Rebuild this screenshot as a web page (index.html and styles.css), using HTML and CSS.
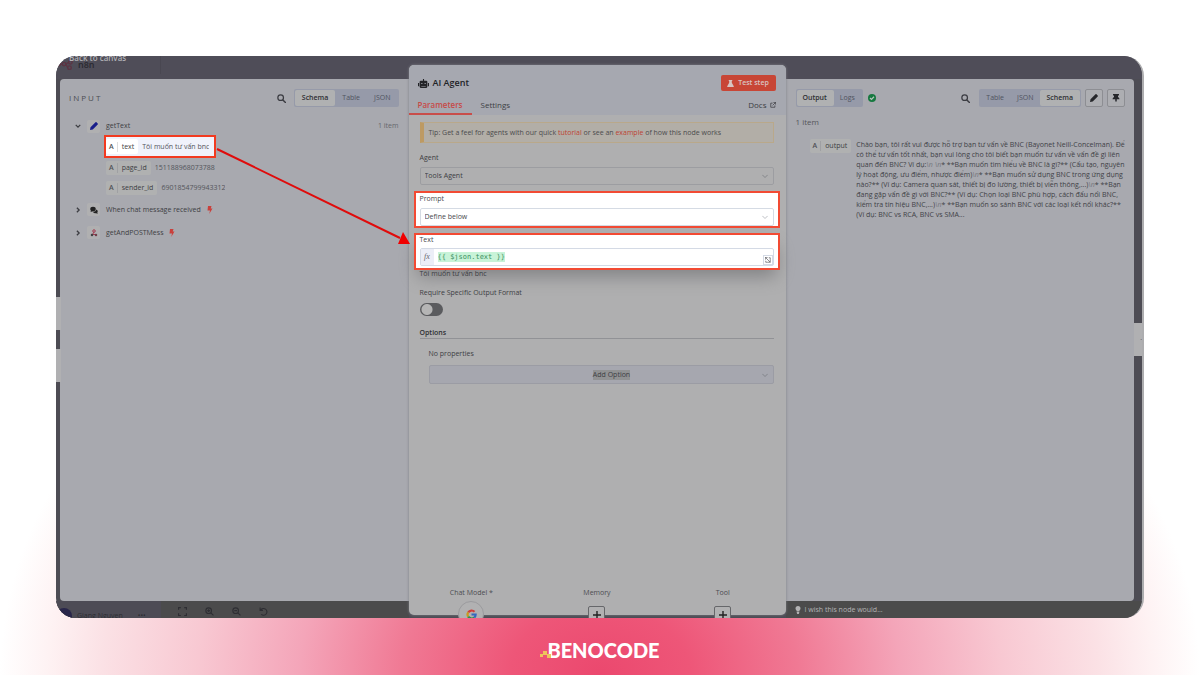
FILE: index.html
```html
<!DOCTYPE html>
<html lang="vi">
<head>
<meta charset="utf-8">
<title>AI Agent</title>
<link rel="stylesheet" href="styles.css">
</head>
<body>
<svg class="defs" aria-hidden="true">
  <symbol id="search" viewBox="0 0 16 16"><circle cx="6.5" cy="6.5" r="5" fill="none" stroke="currentColor" stroke-width="2.2"/><path d="M10.5 10.5 15 15" stroke="currentColor" stroke-width="2.6" stroke-linecap="round"/></symbol>
  <symbol id="pencil" viewBox="0 0 16 16"><path d="M0 16l1-5.500L9 2.500 13.500 7 5.500 15zM9 2.500l2-2q1-.8 2 0l2.400 2.400q.8 1 0 2L13.500 7z" fill="currentColor"/></symbol>
  <symbol id="down" viewBox="0 0 16 16"><path d="M2 5l6 6 6-6" fill="none" stroke="currentColor" stroke-width="3.500"/></symbol>
  <symbol id="thin" viewBox="0 0 16 16"><path d="M1 5l7 7 7-7" fill="none" stroke="currentColor" stroke-width="2"/></symbol>
  <symbol id="right" viewBox="0 0 16 16"><path d="M5 2l6 6-6 6" fill="none" stroke="currentColor" stroke-width="3.500"/></symbol>
  <symbol id="bolt" viewBox="0 0 16 16"><path d="M4 0h7L9.500 5H13L6.500 16 8 9H3z" fill="currentColor"/></symbol>
  <symbol id="zoomin" viewBox="0 0 16 16"><circle cx="6.500" cy="6.500" r="5" fill="none" stroke="currentColor" stroke-width="2"/><path d="M10.500 10.500 15 15M4 6.500h5M6.500 4v5" stroke="currentColor" stroke-width="2"/></symbol>
  <symbol id="zoomout" viewBox="0 0 16 16"><circle cx="6.500" cy="6.500" r="5" fill="none" stroke="currentColor" stroke-width="2"/><path d="M10.500 10.500 15 15M4 6.500h5" stroke="currentColor" stroke-width="2"/></symbol>
</svg>
<main class="frame">
  <header class="topbar">
    <div class="brand"><svg class="brand-mark" viewBox="0 0 20 10"><g fill="none" stroke="currentColor" stroke-width="1.500"><circle cx="3" cy="4" r="2"/><circle cx="9" cy="4" r="2"/><circle cx="16" cy="2" r="2"/><circle cx="15" cy="8" r="2"/><path d="M5 4h2M11 4l3-2M11 4l2 4"/></g></svg><span>n8n</span></div>
    <a class="back" href="#">Back to canvas</a>
  </header>
  <div class="rail rail-left"><span class="handle"></span><span class="handle"></span></div>

  <section class="panel input">
    <div class="panel-head">
      <h2 class="caps">INPUT</h2>
      <svg class="i9"><use href="#search"/></svg>
      <div class="seg"><button class="on">Schema</button><button>Table</button><button>JSON</button></div>
    </div>
    <div class="tree">
      <div class="node first"><svg class="i6"><use href="#down"/></svg><span class="tile blue"><svg class="i8"><use href="#pencil"/></svg></span><span>getText</span><span class="count">1 item</span></div>
      <div class="leaf marked"><span class="pill white"><b>A</b><span>text</span></span><span class="val">Tôi muốn tư vấn bnc</span></div>
      <div class="leaf"><span class="pill"><b>A</b><span>page_id</span></span><span class="val">151188968073788</span></div>
      <div class="leaf"><span class="pill"><b>A</b><span>sender_id</span></span><span class="val">6901854799943312</span></div>
      <div class="node"><svg class="i6"><use href="#right"/></svg><span class="tile"><svg class="i8" viewBox="0 0 16 16"><ellipse cx="6" cy="6" rx="5.500" ry="4.500" fill="currentColor"/><path d="M1 12l2-5 4 3zM12 7q4 1 3.500 4-.5 1.500-1 2l1 2.500-3.500-1q-5 .500-6-3 6 0 6-4.500z" fill="currentColor"/></svg></span><span>When chat message received</span><svg class="i8 red"><use href="#bolt"/></svg></div>
      <div class="node"><svg class="i6"><use href="#right"/></svg><span class="tile"><svg class="i8" viewBox="0 0 16 16"><circle cx="8" cy="4" r="2.500" fill="none" stroke="#a33c50" stroke-width="2"/><path d="M8 6 5 11h7" fill="none" stroke="#a33c50" stroke-width="2"/><circle cx="4" cy="12" r="2.500" fill="#444"/><circle cx="12" cy="12" r="2.500" fill="#70404a"/></svg></span><span>getAndPOSTMess</span><svg class="i8 red"><use href="#bolt"/></svg></div>
    </div>
  </section>

  <section class="dialog">
    <header class="dialog-head">
      <div class="title-row">
        <svg class="robot" viewBox="0 0 20 16"><path d="M9 0h2v3h4q2 0 2 2v9q0 2-2 2H5q-2 0-2-2V5q0-2 2-2h4zM0 7h2v6H0zM18 7h2v6h-2z" fill="currentColor"/><path d="M6 7h2v2H6zM12 7h2v2h-2zM6 12.500h8v1H6z" fill="#a6a8b0"/></svg>
        <h1>AI Agent</h1>
        <button class="test"><svg class="i7" viewBox="0 0 16 16"><path d="M4 0h8v2h-1v4l4.500 8q.5 2-1.500 2H2q-2 0-1.500-2L5 6V2H4z" fill="currentColor"/></svg>Test step</button>
      </div>
      <nav class="tabs"><button class="active">Parameters</button><button>Settings</button>
        <a class="docs" href="#">Docs <svg class="i6" viewBox="0 0 16 16"><path d="M7 3H2v11h11V9M9 1h6v6M15 1 7 9" fill="none" stroke="currentColor" stroke-width="2"/></svg></a></nav>
    </header>
    <div class="form">
      <p class="tip">Tip: Get a feel for agents with our quick <a href="#">tutorial</a> or see an <a href="#">example</a> of how this node works</p>
      <div class="field">
        <label for="agent">Agent</label>
        <div class="pick"><select id="agent"><option>Tools Agent</option></select><svg class="i6"><use href="#thin"/></svg></div>
      </div>
      <div class="field box">
        <label for="prompt">Prompt</label>
        <div class="pick"><select id="prompt"><option>Define below</option></select><svg class="i6"><use href="#thin"/></svg></div>
      </div>
      <div class="field box expr-box">
        <label for="text">Text</label>
        <div class="expr"><span class="fx">fx</span><input id="text" value="{{ $json.text }}"><button class="expand" aria-label="Expand"><svg class="i6" viewBox="0 0 16 16"><path d="M1 7V1h6M1 1l13 13M14 6v8H6M10 2h4v4M2 10v4h4" fill="none" stroke="currentColor" stroke-width="1.800"/></svg></button></div>
      </div>
      <p class="hint">Tôi muốn tư vấn bnc</p>
      <label class="req" for="fmt">Require Specific Output Format</label>
      <input class="switch" type="checkbox" id="fmt">
      <h3>Options</h3>
      <div class="options">
        <p>No properties</p>
        <button class="add"><span>Add Option</span><svg class="i6"><use href="#thin"/></svg></button>
      </div>
      <div class="links">
        <div><span>Chat Model *</span><button class="round" aria-label="Google model"><svg viewBox="0 0 20 20"><g fill="none" stroke-width="4"><path d="M15.500 5A7.500 7.500 0 0 0 4 6" stroke="#cf3f38"/><path d="M4 6a7.500 7.500 0 0 0 0 8" stroke="#c99a1c"/><path d="M4 14a7.500 7.500 0 0 0 11 1.500" stroke="#2f8f4c"/><path d="M15 15.500q2.500-2 2.500-5.500H10" stroke="#3568bd"/></g></svg></button></div>
        <div><span>Memory</span><button class="plus" aria-label="Add memory"><svg class="i8" viewBox="0 0 16 16"><path d="M8 0v16M0 8h16" stroke="currentColor" stroke-width="2.800"/></svg></button></div>
        <div><span>Tool</span><button class="plus" aria-label="Add tool"><svg class="i8" viewBox="0 0 16 16"><path d="M8 0v16M0 8h16" stroke="currentColor" stroke-width="2.800"/></svg></button></div>
      </div>
    </div>
  </section>

  <section class="panel output">
    <div class="panel-head">
      <div class="seg"><button class="on">Output</button><button>Logs</button></div>
      <svg class="i8 ok" viewBox="0 0 16 16"><circle cx="8" cy="8" r="8" fill="#16783f"/><path d="M4 8l3 3 5-5.500" fill="none" stroke="#b5c5bc" stroke-width="2.400"/></svg>
      <svg class="i9 push"><use href="#search"/></svg>
      <div class="seg"><button>Table</button><button>JSON</button><button class="on">Schema</button></div>
      <button class="square" aria-label="Edit output"><svg class="i8"><use href="#pencil"/></svg></button>
      <button class="square" aria-label="Pin data"><svg class="i8" viewBox="0 0 16 16"><path d="M2 0h12v3h-2v3q3 1.500 3 4.500H9.500V14L8 16l-1.500-2v-3.500H1Q1 7.500 4 6V3H2z" fill="currentColor"/></svg></button>
    </div>
    <p class="items">1 item</p>
    <div class="result">
      <span class="pill"><b>A</b><span>output</span></span>
      <p class="answer">Chào bạn, tôi rất vui được hỗ trợ bạn tư vấn về BNC (Bayonet Neill-Concelman). Để<br>có thể tư vấn tốt nhất, bạn vui lòng cho tôi biết bạn muốn tư vấn về vấn đề gì liên<br>quan đến BNC? Ví dụ:<i>\n</i> <i>\n</i>* **Bạn muốn tìm hiểu về BNC là gì?** (Cấu tạo, nguyên<br>lý hoạt động, ưu điểm, nhược điểm)<i>\n</i>* **Bạn muốn sử dụng BNC trong ứng dụng<br>nào?** (Ví dụ: Camera quan sát, thiết bị đo lường, thiết bị viễn thông,...)<i>\n</i>* **Bạn<br>đang gặp vấn đề gì với BNC?** (Ví dụ: Chọn loại BNC phù hợp, cách đấu nối BNC,<br>kiểm tra tín hiệu BNC,...)<i>\n</i>* **Bạn muốn so sánh BNC với các loại kết nối khác?**<br>(Ví dụ: BNC vs RCA, BNC vs SMA...</p>
    </div>
  </section>
  <div class="rail rail-right"><span class="handle">·</span></div>

  <footer class="bar-left">
    <div class="user"><span class="avatar"></span><span>Giang Nguyen</span><span class="dots">•••</span></div>
    <div class="tools">
      <svg class="i9" viewBox="0 0 16 16"><path d="M1 5V1h4M11 1h4v4M15 11v4h-4M5 15H1v-4" fill="none" stroke="currentColor" stroke-width="2"/></svg>
      <svg class="i9"><use href="#zoomin"/></svg>
      <svg class="i9"><use href="#zoomout"/></svg>
      <svg class="i9" viewBox="0 0 16 16"><path d="M2 1v5h5M3 5.500A6 6 0 1 1 4 13" fill="none" stroke="currentColor" stroke-width="2"/></svg>
    </div>
  </footer>
  <footer class="bar-right"><svg class="i8" viewBox="0 0 16 16"><path d="M8 0q5 0 5 5 0 2-2 4l-.5 2h-5L5 9Q3 7 3 5q0-5 5-5zM5.500 12h5v1.500L9.500 16h-3l-1-2.500z" fill="currentColor"/></svg><a href="#">I wish this node would...</a></footer>

  <svg class="arrow" viewBox="0 0 200 104"><path d="M1 4 184 93" stroke="#e00b0b" stroke-width="2"/><path d="M194 99 182 99 187 87z" fill="#f00000"/></svg>
</main>
<div class="logo"><svg class="logo-mark" viewBox="0 0 12 8"><g fill="#edc45c"><path d="M0 4h3v3H0zM3 1h4v4H3zM7 4h4v4H7z"/></g></svg><span>BENOCODE</span></div>
</body>
</html>
```

FILE: styles.css
```css
* { box-sizing: border-box; }
body {
  margin: 0;
  min-height: 100vh;
  padding: 56px 56px 0;
  display: flex;
  flex-direction: column;
  font: 7px/10px "Open Sans", "Noto Sans", sans-serif;
  color: #3d3e43;
  background: radial-gradient(ellipse 50% 460px at 50% 100%, #eb486e 0, #ee5678 15%, #f07994 33%, #f4a5b9 50%, #f8c8d2 67%, #fbe1e5 83%, #fef2f3 92%, #fff 100%);
}
h1, h2, h3, p { margin: 0; font-size: inherit; font-weight: 400; }
button, input, select { font: inherit; color: inherit; margin: 0; padding: 0; border: 0; background: none; }
a { color: inherit; text-decoration: none; }
svg { display: block; flex: none; }
.defs { position: absolute; width: 0; height: 0; }
.i6 { width: 6px; height: 6px; }
.i7 { width: 7px; height: 7px; }
.i8 { width: 8px; height: 8px; }
.i9 { width: 9px; height: 9px; }
.red { color: #c9403c; }

.frame {
  flex: 1;
  position: relative;
  display: grid;
  grid-template-columns: 4px 1fr 377px 1fr 8px;
  grid-template-rows: 23px 1fr 17px;
  background: #4d4c54;
  border-right: 2px solid #adadaf;
  border-radius: 20px;
  overflow: hidden;
}
.topbar { grid-area: 1 / 1 / 2 / 6; position: relative; background: #4f4d58; }
.brand { display: flex; align-items: center; gap: 4px; width: 105px; height: 18px; border-right: 1px solid #494751; color: #2a2930; font-size: 9px; font-weight: 600; }
.brand-mark { width: 18px; height: 10px; color: #5c3444; }
.back { position: absolute; left: 13px; top: -3px; color: #b1b1b6; font-size: 8px; font-weight: 600; }

.rail { display: flex; flex-direction: column; align-items: flex-start; z-index: 1; }
.rail-left { grid-area: 2 / 1; padding-top: 218px; gap: 19px; }
.rail-right { grid-area: 2 / 5; padding-top: 244px; }
.handle { width: 5px; height: 33px; background: #b0b0b2; }
.rail-right .handle { width: 8px; text-align: right; line-height: 33px; }

.panel { padding: 10px 10px 0; background: #a8a9af; min-width: 0; }
.input { grid-area: 2 / 2; padding-left: 9px; border-radius: 4px 0 0 4px; }
.output { grid-area: 2 / 4; padding-right: 9px; border-radius: 0 4px 4px 0; }
.panel-head { display: flex; align-items: center; height: 18px; }
.caps { flex: 1; font-size: 8px; letter-spacing: 2px; color: #4c4d53; }
.panel-head .i9 { margin-right: 8px; color: #3b3c42; }
.panel-head .push { margin-left: auto; margin-right: 9px; }
.ok { margin-left: 5px; }
.seg { display: flex; height: 18px; padding: 1px; border-radius: 2px; background: #969aa9; }
.seg button { padding: 0 7px; border-radius: 2px; font-weight: 500; color: #50545f; }
.seg .on { background: #b0b1b2; color: #2e2f33; font-weight: 600; }
.output .seg button { padding: 0 7px 0 6px; }
.square { display: grid; place-items: center; width: 18px; height: 18px; margin-left: 4px; border: 1px solid #8d8e93; border-radius: 2px; background: #adaeb2; color: #26272b; }

.tree { margin-top: 9px; }
.node { display: flex; align-items: center; height: 23px; padding-left: 6px; }
.node.first { height: 20px; }
.tile { display: grid; place-items: center; width: 13px; height: 13px; margin: 0 6px 0 6px; border-radius: 2px; background: #b0b0b1; color: #222; }
.blue { color: #1a1f8a; }
.node .red { margin-left: 5px; }
.count { margin-left: auto; color: #66676c; }
.leaf { display: flex; align-items: center; height: 20px; margin-left: 37px; gap: 4px; }
.marked { width: 112px; height: 23px; margin: -1px 0 0 35px; border: 2px solid #f23a20; background: #f0f2fb; }
.pill { display: flex; align-items: center; height: 14px; padding: 0 4px 0 3px; border-radius: 2px; background: #b0b1b1; }
.pill b { padding-right: 3px; margin-right: 4px; border-right: 1px solid #9fa0a3; font-weight: 600; color: #4f5055; }
.white { background: #fff; height: 15px; }
.white b { border-color: #ddd; }
.val { color: #54555b; white-space: nowrap; overflow: hidden; }

.items { margin-top: 10px; font-size: 8px; color: #55565b; }
.result { display: flex; align-items: flex-start; gap: 5px; margin: 12px 0 0 14px; }
.answer { margin-top: 1px; white-space: nowrap; color: #404146; }
.answer i { color: #73757d; }

.dialog {
  grid-area: 1 / 3 / 4 / 4;
  z-index: 2;
  display: flex;
  flex-direction: column;
  margin: 9px 0 3px;
  border-radius: 5px;
  background: #afafb0;
  box-shadow: 0 0 3px #7e7f86;
}
.dialog-head { padding: 10px 10px 0 9px; border-radius: 5px 5px 0 0; background: #a6a8b0; }
.title-row { display: flex; align-items: center; height: 16px; gap: 4px; color: #222327; }
.robot { width: 11px; height: 9px; }
h1 { font-size: 9px; font-weight: 600; }
.test { display: flex; align-items: center; justify-content: center; gap: 4px; margin-left: auto; width: 55px; height: 16px; border-radius: 2px; background: #c84636; color: #d8c4c2; font-weight: 600; }
.tabs { display: flex; height: 24px; margin-left: -9px; font-size: 8px; }
.tabs button { padding: 3px 9px 0; font-weight: 500; color: #3e3f45; }
.tabs .active { padding-top: 5px; border-bottom: 2px solid #c94d49; color: #c64a48; font-weight: 600; }
.docs { display: flex; align-items: center; gap: 3px; margin-left: auto; padding-top: 3px; font-weight: 500; }

.form { flex: 1; display: flex; flex-direction: column; padding: 7px 12px 0 11px; }
.tip { padding: 5px; height: 21px; border: 1px solid #b9a88a; border-left: 4px solid #bd9a63; background: #b2aea7; color: #4b4b4d; }
.tip a { color: #bd4234; font-weight: 500; }
.field { display: flex; flex-direction: column; gap: 4px; margin-top: 10px; }
.pick { display: flex; align-items: center; height: 18px; padding-right: 5px; border: 1px solid #9c9da1; border-radius: 2px; }
.pick select { flex: 1; height: 16px; padding-left: 4px; appearance: none; }
.pick svg, .add svg { color: #77787d; }
.box { position: relative; margin: 6px -6px 0; padding: 1px 4px 0; border: 2px solid #f24a33; background: #fff; color: #47484c; }
.box .pick { border-color: #d5dbe4; }
.box .pick svg { color: #a9abb2; }
.expr-box { margin-top: 5px; padding: 0 4px 2px; gap: 3px; box-shadow: 0 10px 18px -4px #808183; }
.expr { display: flex; height: 18px; border: 1px solid #d4dae5; border-radius: 2px; }
.fx { width: 13px; background: #eceef7; color: #66676e; font-family: "Liberation Serif", serif; font-size: 8px; font-style: italic; line-height: 16px; text-align: center; }
.expr input { width: 16ch; height: 10px; margin: 3px auto 0 4px; background: #c8f3d8; color: #3b9160; font-family: "DejaVu Sans Mono", monospace; }
.expand { align-self: flex-end; padding: 1px; border: 1px solid #d4dae5; color: #55565c; }
.hint { position: relative; margin-top: -1px; }
.req { position: relative; margin-top: 9px; }
.switch { appearance: none; width: 23px; height: 13px; margin-top: 5px; border-radius: 7px; background: radial-gradient(circle at 7px 50%, #b5b5b5 0 5px, #5a5b5e 6px); }
h3 { height: 11px; margin-top: 12px; border-bottom: 1px solid #919296; font-weight: 600; color: #2e2f33; }
.options { padding: 10px 0 0 9px; }
.add { display: flex; align-items: center; width: 100%; height: 19px; margin-top: 6px; padding: 0 5px 0 32px; border: 1px solid #9b9ca4; border-radius: 2px; background: #a6a7af; }
.add span { margin: 0 auto; background: #919293; }
.links { display: grid; grid-template-columns: repeat(3, 1fr); height: 27px; margin: auto -12px 0 -11px; }
.links div { display: flex; flex-direction: column; align-items: center; color: #4c4d51; }
.round { display: grid; place-items: center; flex: none; width: 26px; height: 26px; margin-top: 3px; border: 1px solid #9b9b9e; border-radius: 50%; background: #b1b1b2; }
.round svg { width: 11px; height: 11px; }
.plus { display: grid; place-items: center; flex: none; width: 17px; height: 17px; margin-top: 8px; border: 1px solid #66676a; border-radius: 2px; background: #b1b1b2; color: #222; }

.bar-left { grid-area: 3 / 1 / 4 / 3; display: flex; background: #4b4b4c; color: #2e2e33; overflow: hidden; }
.user { display: flex; align-items: flex-start; gap: 5px; width: 105px; padding-top: 10px; background: #4d4b55; }
.avatar { width: 16px; height: 16px; margin-top: -3px; border-radius: 50%; background: #29264a; }
.dots { margin-left: 10px; }
.tools { display: flex; gap: 18px; padding: 6px 0 0 17px; }
.bar-right { grid-area: 3 / 4 / 4 / 6; display: flex; align-items: center; gap: 3px; padding-left: 8px; background: #4b4b4b; color: #b3b3b4; }
.arrow { position: absolute; left: 160px; top: 89px; width: 200px; height: 104px; z-index: 3; }
.logo { display: flex; align-items: center; justify-content: center; height: 57px; padding-top: 7px; color: #fff; font: 900 20px/24px Lato, sans-serif; }
.logo-mark { width: 12px; height: 8px; margin: 7px -5px 0 0; z-index: 1; }
```
